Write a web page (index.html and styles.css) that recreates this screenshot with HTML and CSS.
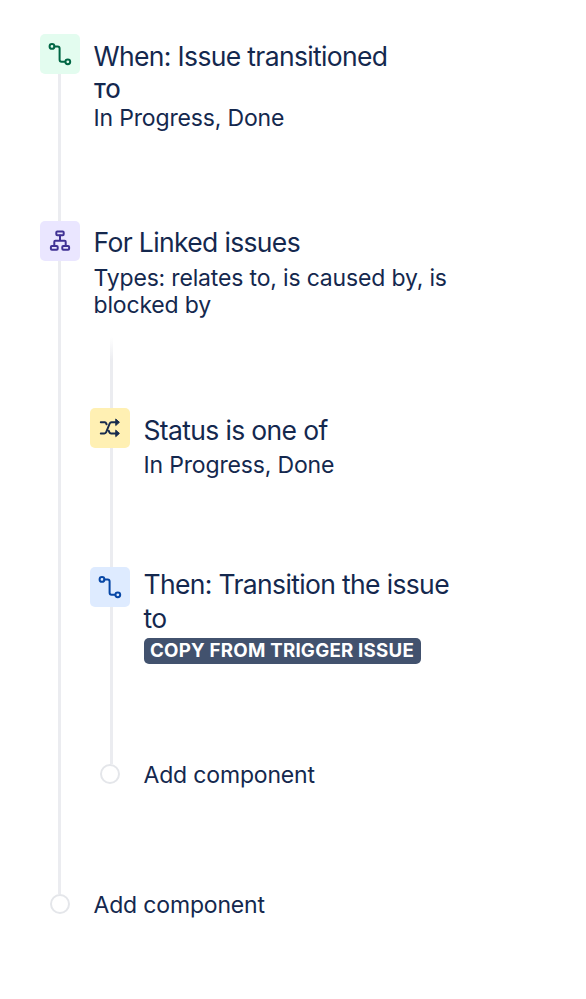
FILE: index.html
```html
<!DOCTYPE html>
<html lang="en">
<head>
  <meta charset="utf-8">
  <title>Automation rule</title>
  <link rel="stylesheet" href="styles.css">
</head>
<body>
  <div class="rule">
    <div class="step step-trigger">
      <div class="rail">
        <div class="icon icon-green">
          <svg width="24" height="24" viewBox="0 0 24 24">
            <circle cx="4" cy="4.4" r="2.4"/>
            <path d="M6.4 4.4h3.2a2 2 0 0 1 2 2v11.4a2 2 0 0 0 2 2h3.6"/>
            <circle cx="19.8" cy="19.8" r="2.4"/>
          </svg>
        </div>
        <div class="line"></div>
      </div>
      <div class="content">
        <div class="text">
          <h2>When: Issue transitioned</h2>
          <p class="label">TO</p>
          <p>In Progress, Done</p>
        </div>
      </div>
    </div>

    <div class="step step-linked">
      <div class="rail">
        <div class="icon icon-purple">
          <svg width="24" height="24" viewBox="0 0 24 24">
            <rect x="8.3" y="2.5" width="7.4" height="3.8" rx="1"/>
            <rect x="2.9" y="17" width="6.8" height="3.8" rx="1"/>
            <rect x="14.3" y="17" width="6.8" height="3.8" rx="1"/>
            <path d="M12 6.5v5M6.3 17v-4.2a1 1 0 0 1 1-1h9.4a1 1 0 0 1 1 1V17"/>
          </svg>
        </div>
        <div class="line"></div>
      </div>
      <div class="content">
        <div class="text">
          <h2>For Linked issues</h2>
          <p class="types">Types: relates to, is caused by, is blocked by</p>
        </div>

        <div class="branch">
          <div class="branch-start"></div>

          <div class="step step-condition">
            <div class="rail">
              <div class="icon icon-yellow">
                <svg width="24" height="24" viewBox="0 0 24 24">
                  <path d="M2.800 6.300h4q1 0 1.400 1l.4 1M2.800 17.400h3.600q1.300 0 1.800-1.200L11.700 7.500q.5-1.200 1.800-1.200H19M10.800 14.900l.6 1.400q.5 1.100 1.700 1.100H19"/>
                  <path class="fill" d="M18 3.300L21.400 6.300 18 9.300zM18 14.400l3.400 3-3.400 3z"/>
                </svg>
              </div>
              <div class="line"></div>
            </div>
            <div class="content">
              <div class="text">
                <h2>Status is one of</h2>
                <p>In Progress, Done</p>
              </div>
            </div>
          </div>

          <div class="step step-action">
            <div class="rail">
              <div class="icon icon-blue">
                <svg width="24" height="24" viewBox="0 0 24 24">
                  <circle cx="4" cy="4.4" r="2.4"/>
                  <path d="M6.4 4.4h3.2a2 2 0 0 1 2 2v11.4a2 2 0 0 0 2 2h3.6"/>
                  <circle cx="19.8" cy="19.8" r="2.4"/>
                </svg>
              </div>
              <div class="line"></div>
            </div>
            <div class="content">
              <div class="text">
                <h2>Then: Transition the issue<br>to</h2>
                <span class="lozenge">COPY FROM TRIGGER ISSUE</span>
              </div>
            </div>
          </div>

          <div class="add">
            <span class="dot"></span>
            <span class="add-label">Add component</span>
          </div>
        </div>
      </div>
    </div>

    <div class="add">
      <span class="dot"></span>
      <span class="add-label">Add component</span>
    </div>
  </div>
</body>
</html>
```
FILE: styles.css
```css
body {
  margin: 0;
  background: #fff;
  color: #14284e;
  font-family: Inter, "Liberation Sans", sans-serif;
  font-size: 23px;
  line-height: 27px;
  letter-spacing: -0.17px;
}
h2, p {
  margin: 0;
}
.rule {
  padding: 34px 0 40px 40px;
}
.step {
  display: flex;
  gap: 10px;
}
.rail {
  width: 40px;
  display: flex;
  flex-direction: column;
}
.line {
  flex: 1;
  width: 3px;
  margin-left: 18px;
  background: #ebecf0;
}
.branch .line {
  margin-left: 20px;
}
.text {
  padding-left: 3.5px;
}
h2 {
  font-size: 26.5px;
  font-weight: 400;
  line-height: 33px;
  letter-spacing: -0.65px;
}

/* rows */
.step-trigger {
  height: 187px;
}
.step-trigger .text {
  padding-top: 6px;
}
.step-linked {
  height: 673px;
}
.step-linked > .content > .text {
  box-sizing: border-box;
  height: 116px;
  padding-top: 5px;
}
.step-condition {
  height: 159px;
}
.step-action {
  height: 197px;
}
.step-condition .text {
  padding-top: 6px;
}
.step-action h2 {
  line-height: 34px;
}
.label {
  font-size: 19.5px;
  font-weight: 600;
  line-height: 28px;
  padding-top: 4px;
}
.types {
  width: 370px;
  padding-top: 6px;
}
.step-condition p {
  padding-top: 5px;
}
.branch-start {
  width: 3px;
  height: 71px;
  margin-left: 20px;
  background: linear-gradient(rgba(235, 236, 240, 0), #ebecf0 24px);
}

/* icons */
.icon {
  height: 40px;
  border-radius: 5px;
  display: flex;
  align-items: center;
  justify-content: center;
}
.icon svg {
  fill: none;
  stroke: currentColor;
  stroke-width: 2;
  stroke-linecap: round;
  stroke-linejoin: round;
}
.icon .fill {
  fill: currentColor;
  stroke-width: 1;
}
.icon-green {
  color: #006644;
  background: #e3fcef;
}
.icon-purple {
  color: #403294;
  background: #eae6ff;
}
.icon-yellow {
  color: #172b4d;
  background: #fff0b3;
}
.icon-blue {
  color: #0747a6;
  background: #deebff;
}

.lozenge {
  display: block;
  width: max-content;
  margin-top: 3px;
  padding: 0 6.5px;
  border-radius: 5px;
  background: #42526e;
  color: #fff;
  font-size: 18.7px;
  font-weight: 700;
  line-height: 26px;
  letter-spacing: 0.23px;
  white-space: nowrap;
}
.add {
  display: flex;
  align-items: center;
  height: 20px;
  padding-left: 10px;
  gap: 23.5px;
}
.add-label {
  padding-top: 2px;
}
.dot {
  box-sizing: border-box;
  width: 20px;
  height: 20px;
  border: 2px solid #e4e6ea;
  border-radius: 50%;
}
```
